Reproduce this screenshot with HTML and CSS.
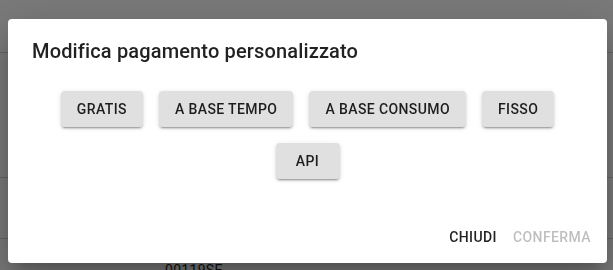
FILE: index.html
```html
<!DOCTYPE html>
<html lang="it">
<head>
<meta charset="utf-8">
<title>Modifica pagamento personalizzato</title>
<link rel="stylesheet" href="styles.css">
</head>
<body>
<div class="page">
  <div class="row row-a"></div>
  <div class="row row-b"></div>
  <div class="row row-c"></div>
  <div class="row row-d"><span class="code">00119SE</span></div>
</div>
<div class="backdrop"></div>
<div class="dialog-wrap">
  <div class="dialog" role="dialog">
    <h2 class="dialog-title">Modifica pagamento personalizzato</h2>
    <div class="dialog-content">
      <div class="options">
        <button class="btn-contained">Gratis</button>
        <button class="btn-contained">A base tempo</button>
        <button class="btn-contained">A base consumo</button>
        <button class="btn-contained">Fisso</button>
        <button class="btn-contained">API</button>
      </div>
    </div>
    <div class="dialog-actions">
      <button class="btn-text">Chiudi</button>
      <button class="btn-text disabled" disabled>Conferma</button>
    </div>
  </div>
</div>
</body>
</html>
```

FILE: styles.css
```css
html, body {
  margin: 0;
  padding: 0;
  height: 100%;
  overflow: hidden;
}

body {
  background: #f4f4f4;
  font-family: Roboto, "Liberation Sans", Arial, sans-serif;
}

.page {
  display: flex;
  flex-direction: column;
}

.row {
  border-bottom: 1px solid #c8c8c8;
}

.row-a { height: 52px; }
.row-b { height: 124px; }
.row-c { height: 60px; }
.row-d {
  height: 40px;
  padding-left: 165px;
  padding-top: 21px;
  box-sizing: border-box;
  border-bottom: none;
}

.code {
  font-size: 14px;
  color: #222;
  letter-spacing: 0.3px;
}

.backdrop {
  position: fixed;
  inset: 0;
  background: rgba(0, 0, 0, 0.5);
}

.dialog-wrap {
  position: fixed;
  inset: 0;
  display: flex;
  justify-content: flex-start;
  align-items: flex-start;
  padding: 19px 0 0 8px;
}

.dialog {
  width: 599px;
  height: 244px;
  background: #fff;
  border-radius: 4px;
  display: flex;
  flex-direction: column;
  box-shadow: 0 11px 15px -7px rgba(0,0,0,0.2),
              0 24px 38px 3px rgba(0,0,0,0.14),
              0 9px 46px 8px rgba(0,0,0,0.12);
}

.dialog-title {
  margin: 0;
  padding: 16px 24px;
  font-size: 20px;
  line-height: 32px;
  font-weight: 500;
  letter-spacing: 0.0075em;
  color: rgba(0, 0, 0, 0.87);
}

.dialog-content {
  flex: 1;
  padding: 8px 24px 0;
}

.options {
  display: flex;
  flex-wrap: wrap;
  justify-content: center;
  gap: 16px;
}

.btn-contained,
.btn-text {
  font-family: inherit;
  font-size: 14px;
  font-weight: 500;
  line-height: 24px;
  letter-spacing: 0.02857em;
  text-transform: uppercase;
  border: 0;
  border-radius: 4px;
  min-width: 64px;
  cursor: pointer;
}

.btn-contained {
  height: 36px;
  padding: 6px 16px;
  background: #e0e0e0;
  color: rgba(0, 0, 0, 0.87);
  box-shadow: 0 3px 1px -2px rgba(0,0,0,0.2),
              0 2px 2px 0 rgba(0,0,0,0.14),
              0 1px 5px 0 rgba(0,0,0,0.12);
}

.dialog-actions {
  display: flex;
  justify-content: flex-end;
  gap: 0;
  padding: 8px;
}

.btn-text {
  height: 36px;
  padding: 6px 8px;
  background: transparent;
  color: rgba(0, 0, 0, 0.87);
}

.btn-text.disabled {
  color: rgba(0, 0, 0, 0.26);
  cursor: default;
}
```
